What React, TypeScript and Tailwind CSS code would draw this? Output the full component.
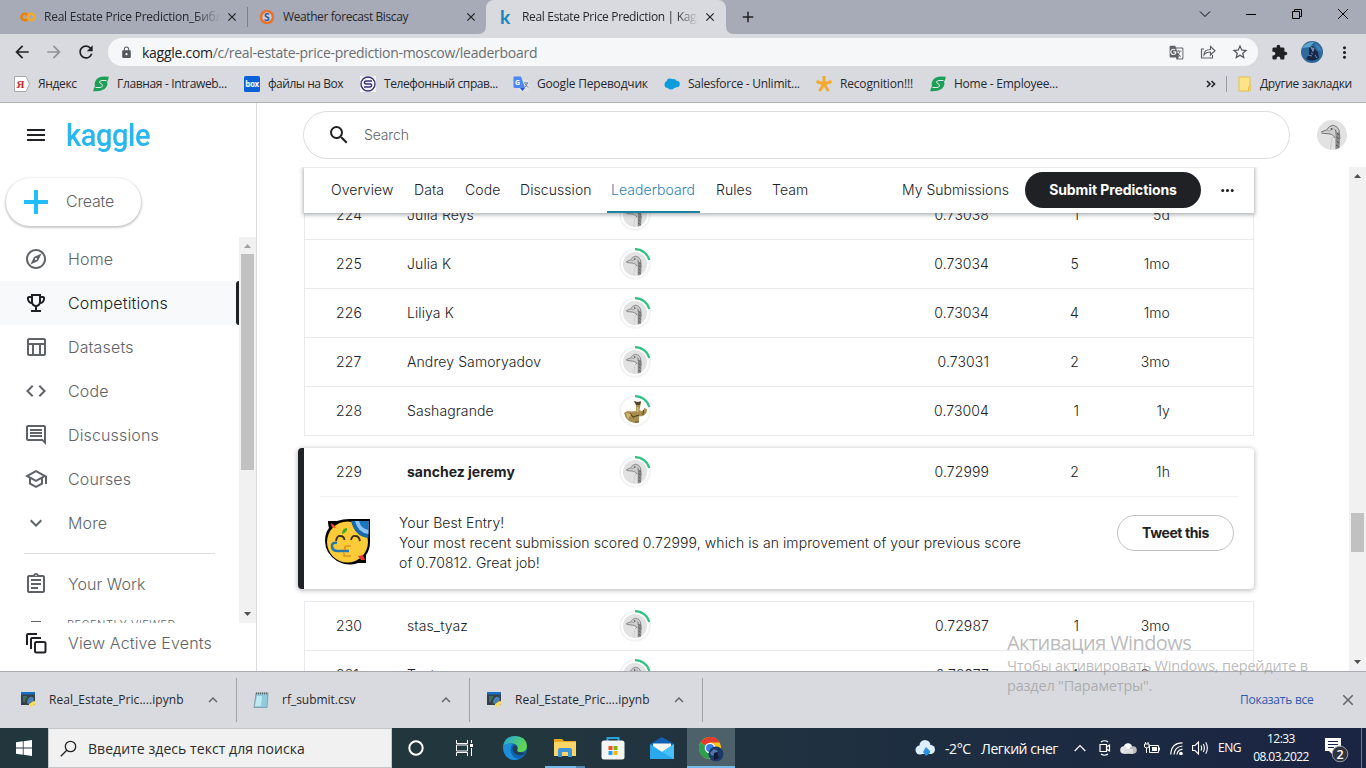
import React from "react";
import {
  MdAdd, MdArrowBack, MdArrowForward, MdClose, MdCode, MdExpandLess, MdExpandMore, MdExtension, MdGTranslate,
  MdLock, MdMenu, MdMoreHoriz, MdMoreVert, MdOutlineAssignment, MdOutlineComment, MdOutlineEmojiEvents,
  MdOutlineExplore, MdOutlineSchool, MdOutlineTableChart, MdRefresh, MdSearch, MdStarOutline,
} from "react-icons/md";

const ui = "font-['Open_Sans','Noto_Sans',sans-serif]";

function Goose({ className }: { className: string }) {
  return (
    <svg viewBox="0 0 30 30" className={className}>
      <circle cx="15" cy="15" r="15" fill="#e2e2e2" />
      <path d="M4 12 L9.500 10 Q12 5.500 16 5.200 Q20.500 6 22 10 L23 19 L22.500 28 L18 29.500 L18 20 Q18 16 15.500 14.500 L11 14.500 L5 13.500 Z" fill="#cfcfcf" />
      <path d="M18.500 13.500 L22 12 L23 21 L22.500 28 L18.500 29.500 Z" fill="#8a8a8a" />
      <path d="M4 12 L9.500 10 Q12 5.500 16 5.200 Q20.500 6 22 10 L23 19 M4.500 13.200 L12 13.800 Q17 14.500 17.500 18" fill="none" stroke="#6c6c6c" strokeWidth=".9" />
      <path d="M9.500 10.200 L12.500 11 L16.500 8.500" fill="none" stroke="#999" strokeWidth=".8" />
      <path d="M15.500 17 Q14 23 13.500 29.500" fill="none" stroke="#b5b5b5" strokeWidth=".6" />
      <path d="M18 9.500 q1.500 1 1 4 M19.500 17 l2.500 2 M19.500 21 l2.500 2 M19 25 l3 2 M20 13 l2 2" stroke="#505050" strokeWidth=".9" fill="none" />
      <circle cx="14.500" cy="8.800" r=".9" fill="#444" />
    </svg>
  );
}

function TierAvatar({ goose = true }: { goose?: boolean }) {
  return (
    <div className="relative h-8 w-8">
      <svg viewBox="0 0 32 32" className="h-8 w-8">
        <circle cx="16" cy="16" r="14.800" fill="none" stroke="#f1f3f4" strokeWidth="2" />
        <path d="M16 1.200 A14.800 14.800 0 0 1 30.300 12" fill="none" stroke="#33c285" strokeWidth="2.200" />
        {!goose && (
          <g>
            <path d="M5 18 Q8 15 12 16.500 L17 16 L17 11 L15 6 L18 7 L22 6.500 L21.500 10 L20.500 15 Q23 17 24.500 15 L25 13 L28 14 L27.500 18 L24 21 L20 21.500 L20 27 L16 28 Q9 27 6.500 22 Z" fill="#a88f50" />
            <path d="M15 6 L18 7 L22 6.500 L21 10 L17.500 10 Z" fill="#54402a" />
            <path d="M11 18 L14 22 L20 20 M24.500 15 L24 20 M16 27 L20 27" stroke="#5a4423" strokeWidth="1.100" fill="none" />
            <path d="M7 18 l5 1 l-3 5 z M17.500 12 h2 v5 h-2 z" fill="#d0b972" />
          </g>
        )}
      </svg>
      {goose && <Goose className="absolute left-1 top-1 h-6 w-6" />}
    </div>
  );
}

/* ---------- browser chrome ---------- */

function SwooshIcon() {
  return (
    <svg viewBox="0 0 16 16" className="h-4 w-4">
      <path d="M5 2 Q9 0 15.800 .8 Q15.500 4 14 5.500 Q15.500 9.500 11.500 13 Q7 16 .2 15.200 Q.5 12 2 10.500 Q.5 5.500 5 2 Z" fill="#1d9f57" />
      <path d="M13.500 4.500 H9 Q6.800 4.600 6.500 6 Q6.500 7.200 8 7.700 Q9.800 8.300 9.500 9.800 Q9 11.500 7 11.500 H2.500" fill="none" stroke="#e4e8e6" strokeWidth="1" />
    </svg>
  );
}

const bookmarks = [
  { w: "w-[79px]", t: "tracking-[-0.35px]", label: "Яндекс", icon: (
    <svg viewBox="0 0 16 16" className="h-4 w-4"><path d="M.5 .5 H12 L15.500 8 L12 15.500 H.5 Z" fill="#fff" stroke="#aaa" /><text x="2.500" y="12" fontSize="11" fontWeight="bold" fontFamily="Liberation Serif" fill="#d3262b">Я</text></svg>) },
  { w: "w-[151px]", t: "tracking-[-0.35px]", label: "Главная - Intraweb...", icon: <SwooshIcon /> },
  { w: "w-[116px]", t: "tracking-[-0.48px]", label: "файлы на Box", icon: (
    <svg viewBox="0 0 16 16" className="h-4 w-4"><rect width="16" height="16" rx="1.500" fill="#0b61d5" /><text x="1.200" y="10.500" fontSize="8" fontWeight="bold" fontFamily="Open Sans" textLength="13.500" fill="#fff">box</text></svg>) },
  { w: "w-[153px]", t: "tracking-[-0.4px]", label: "Телефонный справ...", icon: (
    <svg viewBox="0 0 16 16" className="h-4 w-4"><rect width="16" height="16" fill="#f4f2f8" /><circle cx="8" cy="8" r="7" fill="none" stroke="#3d3478" strokeWidth="1.400" /><path d="M12 5 H6.500 Q4.500 5 4.500 6.500 Q4.500 8 6.500 8 H11.500 M4 11 H9.500 Q11.500 11 11.500 9.500 V8" fill="none" stroke="#3d3478" strokeWidth="1.400" /></svg>) },
  { w: "w-[151px]", t: "tracking-[-0.2px]", label: "Google Переводчик", icon: (
    <svg viewBox="0 0 16 16" className="h-4 w-4"><rect x="6" y="4" width="9.500" height="11" rx="1" fill="#dfe3ea" /><path d="M1 .5 H8 L12 12 H2 Q.5 12 .5 10.500 V1 Z" fill="#4d86ee" /><path d="M7 12 H12 L9.500 15 Z" fill="#2f50c8" /><text x="2" y="9" fontSize="7" fontWeight="bold" fontFamily="Open Sans" fill="#fff">G</text><path d="M11 7 H15 M13 6 V7 M14.500 7 Q13.500 10 11.500 11.500 M12 8 L15 11.500" stroke="#6a7a8d" strokeWidth=".9" fill="none" /></svg>) },
  { w: "w-[152px]", t: "tracking-[-0.25px]", label: "Salesforce - Unlimit...", icon: (
    <svg viewBox="0 0 16 16" className="h-4 w-4"><g fill="#0e9ddb"><circle cx="4" cy="8.500" r="3.500" /><circle cx="6" cy="6" r="3.400" /><circle cx="9.500" cy="6" r="3" /><circle cx="12.500" cy="8" r="3.300" /><circle cx="7" cy="10" r="3.500" /><circle cx="10" cy="9" r="3" /></g></svg>) },
  { w: "w-[114px]", t: "tracking-[-0.18px]", label: "Recognition!!!", icon: (
    <svg viewBox="0 0 16 16" className="h-4 w-4"><g stroke="#f1a92f" strokeWidth="3"><path d="M8 8 V0 M8 8 L15.500 5.500 M8 8 L.5 5.500 M8 8 L12.500 15 M8 8 L3.500 15" /></g></svg>) },
  { w: "w-[150px]", t: "tracking-[-0.25px]", label: "Home - Employee...", icon: <SwooshIcon /> },
];

function Chrome() {
  return (
    <header className={`shrink-0 text-[12px] text-[#26282d] ${ui}`}>
      <div className="flex h-[34px] bg-[#a7abb7]">
        <div className="flex w-[247px] items-center pl-5">
          <svg viewBox="0 0 16 10" className="h-2.5 w-4"><circle cx="4.800" cy="5" r="3.300" fill="none" stroke="#e8820c" strokeWidth="2.600" /><circle cx="11.200" cy="5" r="3.300" fill="none" stroke="#f2a92c" strokeWidth="2.600" /></svg>
          <span className="ml-2 w-[177px] overflow-hidden whitespace-nowrap tracking-[-0.25px] mask-r-from-85%">Real Estate Price Prediction_Библиотека</span>
          <MdClose className="ml-1 h-[14px] w-[14px] text-[#202124]" />
        </div>
        <div className="my-[7px] w-px bg-[#7b7f8a]" />
        <div className="flex w-[238px] items-center pl-[11px]">
          <svg viewBox="0 0 16 16" className="h-4 w-4"><circle cx="8" cy="8" r="6" fill="#c9cdd6" stroke="#e8722b" strokeWidth="2.600" /><text x="5" y="12" fontSize="10.500" fontWeight="bold" fontFamily="Open Sans" fill="#2b5b9e">S</text></svg>
          <span className="ml-2 w-[180px] whitespace-nowrap tracking-[-0.4px]">Weather forecast Biscay</span>
          <MdClose className="ml-[1px] h-[14px] w-[14px] text-[#202124]" />
        </div>
        <div className="relative flex w-[240px] items-center rounded-t-lg bg-[#d9dadf] pl-3">
          <svg viewBox="0 0 8 8" className="absolute -left-2 bottom-0 h-2 w-2"><path d="M8 0 V8 H0 Q8 8 8 0 Z" fill="#d9dadf" /></svg>
          <svg viewBox="0 0 8 8" className="absolute -right-2 bottom-0 h-2 w-2"><path d="M0 0 V8 H8 Q0 8 0 0 Z" fill="#d9dadf" /></svg>
          <span className="w-4 pb-[2px] pl-[2px] font-['Lato'] text-[19px] font-bold leading-none text-[#1584bb]">k</span>
          <span className="ml-2 w-[176px] overflow-hidden whitespace-nowrap tracking-[-0.33px] mask-r-from-88%">Real Estate Price Prediction | Kaggle</span>
          <MdClose className="ml-[5px] h-[14px] w-[14px] text-[#202124]" />
        </div>
        <MdAdd className="ml-[13px] mt-[8px] h-[18px] w-[18px] text-[#202124]" />
        <div className="flex-1" />
        <div className="flex items-start pt-[8px] text-black">
          <svg viewBox="0 0 12 12" className="mr-[34px] h-3 w-3"><path d="M1 3.500 L6 8.500 L11 3.500" fill="none" stroke="currentColor" /></svg>
          <svg viewBox="0 0 12 12" className="mr-[34px] h-3 w-3"><path d="M1 6.500 H11" stroke="currentColor" /></svg>
          <svg viewBox="0 0 12 12" className="mr-[34px] h-3 w-3"><path d="M1.500 3.500 H8.500 V10.500 H1.500 Z M3.500 3.500 V1.500 H10.500 V8.500 H8.500" fill="none" stroke="currentColor" /></svg>
          <svg viewBox="0 0 12 12" className="mr-[17px] h-3 w-3"><path d="M1 1 L11 11 M11 1 L1 11" stroke="currentColor" /></svg>
        </div>
      </div>

      <div className="flex h-[36px] items-center bg-[#d9dadf] pl-[12px]">
        <MdArrowBack className="h-5 w-5 text-[#202124]" />
        <MdArrowForward className="ml-3 h-5 w-5 text-[#909297]" />
        <MdRefresh className="ml-3 h-5 w-5 text-[#202124]" />
        <div className="ml-[12px] flex h-7 w-[1150px] shrink-0 items-center rounded-full bg-[#f5f7f9] pl-3">
          <MdLock className="h-[13px] w-[13px] text-[#55585c]" />
          <span className="ml-[9px] flex-1 whitespace-nowrap text-[14px] tracking-[-0.28px] text-[#6b6e73]">
            <span className="text-[#202124]">kaggle.com</span>/c/real-estate-price-prediction-moscow/leaderboard
          </span>
          <MdGTranslate className="h-[15px] w-[15px] text-[#5f6368]" />
          <svg viewBox="0 0 16 16" className="ml-[16px] h-4 w-4"><path d="M4 5 H1.500 V14 H12.500 V11 M4 11 Q4 5.500 10.500 5.500 V2.500 L15 6.800 L10.500 11 V8 Q6 8 4 11 Z" fill="none" stroke="#5f6368" strokeWidth="1.200" /></svg>
          <MdStarOutline className="ml-[15px] mr-[9px] h-[18px] w-[18px] text-[#4f5257]" />
        </div>
        <MdExtension className="ml-[13px] h-[17px] w-[17px] shrink-0 text-[#202124]" />
        <svg viewBox="0 0 22 22" className="ml-[13px] h-[22px] w-[22px] shrink-0"><circle cx="11" cy="11" r="11" fill="#2e6a9c" /><path d="M1 7 Q6 0 13 1 L9 6 Z" fill="#5fa5cc" /><path d="M14 3 Q20 5 21 11 L17 9 Z" fill="#3f83b4" /><path d="M5 18 L8 13 L8 7 L12 5 L14 8 L17 11 L18 17 Q12 22 5 18 Z" fill="#17284b" /><path d="M10 6.500 l3 1 l-1 3 z M7 14 l4 1 M14 14 l2 3 M10 12 l2 1" fill="#7792b4" stroke="#6f8cb8" /></svg>
        <MdMoreVert className="ml-[12px] h-[19px] w-[19px] shrink-0 text-[#202124]" />
      </div>

      <div className="flex h-[33px] items-center border-b border-[#b0b1b5] bg-[#d9dadf] pb-1 pl-[14px]">
        {bookmarks.map((b) => (
          <div key={b.label} className={`flex shrink-0 items-center gap-2 whitespace-nowrap ${b.w} ${b.t}`}>
            {b.icon}
            <span>{b.label}</span>
          </div>
        ))}
        <div className="flex-1" />
        <svg viewBox="0 0 10 8" className="h-2 w-2.5"><path d="M1 1 L4 4 L1 7 M5.500 1 L8.500 4 L5.500 7" fill="none" stroke="#26282d" strokeWidth="1.700" /></svg>
        <div className="ml-[10px] mr-[11px] h-4 w-px bg-[#9a9ca2]" />
        <svg viewBox="0 0 14 16" className="h-4 w-3.5"><path d="M1 1 H12 V15 H1 Z" fill="#fde48b" stroke="#e6bd46" /><path d="M10.500 15 V11 L12 9.500 V15" fill="#fff3be" stroke="#e6bd46" /></svg>
        <span className="ml-[8px] mr-[14px] w-[92px] whitespace-nowrap tracking-[-0.36px]">Другие закладки</span>
      </div>
    </header>
  );
}

/* ---------- kaggle sidebar ---------- */

const nav = [
  { label: "Home", Icon: MdOutlineExplore },
  { label: "Competitions", Icon: MdOutlineEmojiEvents, active: true },
  { label: "Datasets", Icon: MdOutlineTableChart },
  { label: "Code", Icon: MdCode },
  { label: "Discussions", Icon: MdOutlineComment },
  { label: "Courses", Icon: MdOutlineSchool },
  { label: "More", Icon: MdExpandMore },
];

function Sidebar() {
  return (
    <aside className="flex w-[257px] shrink-0 flex-col border-r border-[#dadce0] text-[16px] font-[350] text-[#5f6368]">
      <div className="flex h-[64px] items-center pl-6">
        <MdMenu className="h-6 w-6 text-[#202124]" />
        <span className="ml-[18px] origin-left scale-x-[0.91] font-['Roboto'] text-[32px] font-medium leading-none tracking-[-0.5px] text-[#2ab7f1]">kaggle</span>
      </div>
      <div className="ml-[6px] mt-[11px] flex h-[48px] w-[135px] items-center rounded-full pl-[18px] shadow-[0_1px_2px_1px_rgba(60,64,67,0.28)]">
        <svg viewBox="0 0 24 24" className="h-6 w-6"><path d="M12 0 V24 M0 12 H24" stroke="#20beff" strokeWidth="4" /></svg>
        <span className="ml-[18px] pb-[2px] tracking-[-0.2px]">Create</span>
      </div>
      <div className="mt-[11px] flex h-[386px]">
        <div className="w-[239px] overflow-hidden">
          {nav.map(({ label, Icon, active }) => (
            <div key={label} className={`flex h-11 items-center pl-6 ${active ? "bg-[#f8f9fb] text-[#202124]" : ""}`}>
              <Icon className="h-6 w-6" />
              <span className="ml-5 flex-1 tracking-[0.15px]">{label}</span>
              {active && <div className="h-11 w-[3px] rounded-l bg-[#202124]" />}
            </div>
          ))}
          <div className="ml-6 mt-2 h-px w-[191px] bg-[#dadce0]" />
          <div className="mt-2 flex h-11 items-center pl-6">
            <MdOutlineAssignment className="h-6 w-6" />
            <span className="ml-5 tracking-[0.05px]">Your Work</span>
          </div>
          <div className="mt-[13px] flex items-start pl-[31px]">
            <div className="mt-[2px] h-2 w-[10px] border-t border-[#5f6368]" />
            <span className="ml-[26px] text-[11px] leading-[13px] tracking-[0.5px]">RECENTLY VIEWED</span>
          </div>
        </div>
        <div className="flex w-[17px] flex-col items-center bg-[#f1f1f1]">
          <svg viewBox="0 0 17 17" className="h-[17px] w-[17px]"><path d="M5 11 L8.500 7 L12 11 Z" fill="#a3a3a3" /></svg>
          <div className="h-[216px] w-[13px] bg-[#c1c1c1]" />
          <div className="flex-1" />
          <svg viewBox="0 0 17 17" className="h-[17px] w-[17px]"><path d="M5 6 L8.500 10 L12 6 Z" fill="#505050" /></svg>
        </div>
      </div>
      <div className="flex h-10 items-center pl-[25px]">
        <svg viewBox="0 0 22 22" className="h-[22px] w-[22px]" fill="none" stroke="#202124" strokeWidth="2"><path d="M2 13 V3 Q2 2 3 2 H12 M6 17 V7 Q6 6 7 6 H16" /><rect x="10" y="10" width="10.500" height="10.500" rx="1.500" /></svg>
        <span className="ml-[21px] tracking-[0.15px]">View Active Events</span>
      </div>
    </aside>
  );
}

/* ---------- leaderboard ---------- */

type Row = { rank: string; name: string; score: string; entries: string; last: string; goose?: boolean; bold?: boolean };

const above: Row[] = [
  { rank: "224", name: "Julia Reys", score: "0.73038", entries: "1", last: "5d" },
  { rank: "225", name: "Julia K", score: "0.73034", entries: "5", last: "1mo" },
  { rank: "226", name: "Liliya K", score: "0.73034", entries: "4", last: "1mo" },
  { rank: "227", name: "Andrey Samoryadov", score: "0.73031", entries: "2", last: "3mo" },
  { rank: "228", name: "Sashagrande", score: "0.73004", entries: "1", last: "1y", goose: false },
];
const below: Row[] = [
  { rank: "230", name: "stas_tyaz", score: "0.72987", entries: "1", last: "3mo" },
  { rank: "231", name: "Test", score: "0.72977", entries: "4", last: "2mo" },
];

function Cells({ r }: { r: Row }) {
  return (
    <div className="grid h-[48px] grid-cols-[71px_212px_40px_330px_90px_91px] items-center pl-[31px] text-[14px] tracking-[0.1px] [&>span]:pb-[2px]">
      <span>{r.rank}</span>
      <span className={r.bold ? "font-bold tracking-normal" : ""}>{r.name}</span>
      <TierAvatar goose={r.goose} />
      <span className="text-right">{r.score}</span>
      <span className="text-right">{r.entries}</span>
      <span className="text-right">{r.last}</span>
    </div>
  );
}

const tabs = [
  { label: "Overview", w: "w-[83px]" },
  { label: "Data", w: "w-[51px]" },
  { label: "Code", w: "w-[55px]" },
  { label: "Discussion", w: "w-[91px]" },
  { label: "Leaderboard", w: "w-[105px]", on: true },
  { label: "Rules", w: "w-[56px]" },
  { label: "Team", w: "w-[60px]" },
];

function PartyFace() {
  return (
    <svg viewBox="0 0 46 46" className="h-[46px] w-[46px]">
      <path d="M3 2 H12 Q18 0 24 0 H45 V23 Q45 31 41 36 V44 H33 Q23 48 12 42 Q0 34 0 22 Q0 14 4 9 Z" fill="#000" />
      <circle cx="22.500" cy="23" r="20.500" fill="#fdca38" />
      <path d="M26 2 H43.500 V19 Q30 18 26 2 Z" fill="#1769b0" />
      <path d="M30 2 H43.500 V15 Q33 14 30 2 Z" fill="#8dc6f5" />
      <path d="M34 2 H43.500 V11 Q36 10 34 2 Z" fill="#1c76bd" />
      <path d="M3 2 H11 L10 6 L7 9 L4 9 Z" fill="#000" />
      <path d="M6 4 L9 6 L11 9 L7 8.500 Z" fill="#ef5a23" />
      <path d="M17 15 Q17 9 22 9 Q23 13 17 15 Z" fill="#48a91f" />
      <path d="M11 22 Q12 16.500 15.500 17 Q19 17 19.500 21 M26 21 Q27 16.500 30.500 17 Q34 17 35 22" fill="none" stroke="#3b2c12" strokeWidth="1.800" />
      <path d="M12 24 Q7 23 7 27 Q7 32 13 32 H24" fill="none" stroke="#2678ac" strokeWidth="2.600" />
      <path d="M26 27 H21 Q19 28 20 31 M19 34 V37 H26" fill="none" stroke="#d99422" strokeWidth="1.600" />
      <path d="M34 41 L41 35 V44 H34 Z" fill="#000" />
      <path d="M33 37 L38 36 L40 41 L36 41 Z" fill="#e93436" />
    </svg>
  );
}

function Main() {
  return (
    <main className="flex flex-1 flex-col font-[350]">
      <div className="flex h-[64px] shrink-0 items-center pl-[46px]">
        <div className="flex h-[48px] w-[987px] items-center rounded-full border border-[#dadce0] pl-[23px]">
          <MdSearch className="h-6 w-6 text-[#202124]" />
          <span className="ml-[13px] pb-px text-[14px] tracking-[-0.15px] text-[#5f6368]">Search</span>
        </div>
        <Goose className="ml-[27px] h-[30px] w-[30px]" />
      </div>
      <div className="flex min-h-0 flex-1">
        <div className="flex w-[1092px] flex-col overflow-hidden pl-[41px] text-[#202124]">
          <div className="relative z-10 ml-[6px] flex h-[46px] w-[950px] shrink-0 items-center bg-white pl-[27px] text-[14px] shadow-[0_1px_4px_1px_rgba(60,64,67,0.4),inset_0_1px_0_#ececee]">
            {tabs.map((t) => (
              <div key={t.label} className={`flex h-full items-center tracking-[0.07px] ${t.w}`}>
                {t.on ? (
                  <span className="-ml-1 flex h-full w-[93px] items-center border-b-2 border-[#20809f] pl-1 text-[#2b82b4]">{t.label}</span>
                ) : (
                  <span className="pb-[2px]">{t.label}</span>
                )}
              </div>
            ))}
            <span className="ml-[70px] w-[123px] whitespace-nowrap pb-[2px]">My Submissions</span>
            <span className="flex h-9 w-[176px] items-center justify-center rounded-full bg-[#202124] pb-[2px] font-bold tracking-[-0.1px] text-white">Submit Predictions</span>
            <MdMoreHoriz className="ml-[17px] h-[19px] w-[19px]" />
          </div>

          <div className="ml-[6px] h-[223px] w-[950px] shrink-0 overflow-hidden">
            <div className="-mt-[22px] border-x border-[#e8eaed]">
              {above.map((r) => (
                <div key={r.rank} className="border-b border-[#e8eaed]"><Cells r={r} /></div>
              ))}
            </div>
          </div>

          <section className="mt-[12px] h-[141px] w-[956px] shrink-0 rounded border-l-[6px] border-[#202124] shadow-[0_1px_4px_1px_rgba(60,64,67,0.3)]">
            <div className="px-px">
              <Cells r={{ rank: "229", name: "sanchez jeremy", score: "0.72999", entries: "2", last: "1h", bold: true }} />
            </div>
            <div className="mx-4 h-px bg-[#f1f3f4]" />
            <div className="flex pl-[21px] pr-5 pt-[16px]">
              <div className="pt-[6px]"><PartyFace /></div>
              <p className="ml-7 w-[640px] text-[14px] leading-5 tracking-[0.08px]">
                Your Best Entry!<br />
                Your most recent submission scored 0.72999, which is an improvement of your previous score<br />
                of 0.70812. Great job!
              </p>
              <div className="flex-1" />
              <span className="mt-[2px] flex h-9 w-[117px] items-center justify-center rounded-full border border-[#bdc1c6] pb-px text-[14px] font-bold tracking-[-0.4px]">Tweet this</span>
            </div>
          </section>

          <div className="ml-[6px] mt-3 w-[950px] shrink-0 border-x border-t border-[#e8eaed]">
            {below.map((r) => (
              <div key={r.rank} className="border-b border-[#e8eaed]"><Cells r={r} /></div>
            ))}
          </div>
        </div>
        <div className="flex w-[17px] flex-col items-center bg-[#f1f1f1]">
          <svg viewBox="0 0 17 17" className="h-[17px] w-[17px]"><path d="M5 11 L8.500 7 L12 11 Z" fill="#505050" /></svg>
          <div className="mt-[329px] h-[39px] w-[13px] bg-[#c1c1c1]" />
          <div className="flex-1" />
          <svg viewBox="0 0 17 17" className="h-[17px] w-[17px]"><path d="M5 6 L8.500 10 L12 6 Z" fill="#505050" /></svg>
        </div>
      </div>
    </main>
  );
}

/* ---------- downloads + taskbar ---------- */

function NotebookIcon() {
  return (
    <svg viewBox="0 0 16 16" className="h-4 w-4">
      <path d="M1 0 H15 V13 H1 Z" fill="#35414a" /><path d="M1 0 H15 V2.500 H1 Z" fill="#1b6fc0" />
      <path d="M3 5 H7 M3 7 H6 M3 9 H5" stroke="#45a06c" />
      <path d="M7 11 Q7 6 11 4.500 L14 6 L13 9 L9 12 Z" fill="#4c80b2" /><path d="M9 12 L14 8.500 Q16.500 11 14 13.500 Q11 15.500 9 15 Z" fill="#f5dc62" />
    </svg>
  );
}

function Downloads() {
  return (
    <div className={`flex h-[57px] shrink-0 items-center border-t border-[#a9abb0] bg-[#d9dadf] text-[12px] text-[#26282d] ${ui}`}>
      {[
        { k: "a", name: "Real_Estate_Pric....ipynb", nb: true, w: "w-[237px]", t: "tracking-[0.05px]" },
        { k: "b", name: "rf_submit.csv", nb: false, w: "w-[233px]", t: "tracking-[-0.02px]" },
        { k: "c", name: "Real_Estate_Pric....ipynb", nb: true, w: "w-[233px]", t: "tracking-[0.05px]" },
      ].map((d) => (
        <div key={d.k} className={`flex h-11 items-center border-r border-[#a0a2a8] pr-[14px] ${d.w}`}>
          <div className="ml-auto flex w-[202px] items-center">
            {d.nb ? <NotebookIcon /> : (
              <svg viewBox="0 0 16 16" className="h-4 w-4"><path d="M3 1 H15 L14 15.500 H1 Z" fill="#8fcbdc" stroke="#6d8d96" strokeWidth=".7" /><path d="M4 4 H9 L8 14 H2 Z" fill="#bfe8f0" /><path d="M3 1.500 H15" stroke="#5d6a6e" strokeWidth="2" strokeDasharray="1 1" /></svg>
            )}
            <span className={`ml-[13px] flex-1 whitespace-nowrap ${d.t}`}>{d.name}</span>
            <MdExpandLess className="h-[18px] w-[18px] text-[#5f6368]" />
          </div>
        </div>
      ))}
      <div className="flex-1" />
      <span className="w-[76px] whitespace-nowrap font-medium tracking-[-0.25px] text-[#2c59ae]">Показать все</span>
      <MdClose className="ml-[23px] mr-[9px] h-[18px] w-[18px] text-[#5f6368]" />
    </div>
  );
}

function Taskbar() {
  return (
    <footer className={`flex h-10 shrink-0 items-center bg-linear-to-r from-[#22363e] from-40% to-[#1a2443] text-white ${ui}`}>
      <div className="flex w-12 justify-center">
        <svg viewBox="0 0 16 16" className="h-4 w-4" fill="#fff"><path d="M0 2.300 L6.800 1.300 V7.500 H0 Z M7.600 1.200 L16 0 V7.500 H7.600 Z M0 8.400 H6.800 V14.700 L0 13.700 Z M7.600 8.400 H16 V16 L7.600 14.800 Z" /></svg>
      </div>
      <div className="flex h-10 w-[344px] items-center border border-[#c4c7c9] bg-[#f1f1f1] pl-[11px] text-[#2b2b2b]">
        <svg viewBox="0 0 17 17" className="h-[17px] w-[17px]"><circle cx="10.500" cy="6.500" r="5.200" fill="none" stroke="#222" strokeWidth="1.300" /><path d="M6.800 10.200 L.8 16.200" stroke="#222" strokeWidth="1.300" /></svg>
        <span className="ml-[11px] whitespace-nowrap text-[14px] tracking-[0.06px]">Введите здесь текст для поиска</span>
      </div>
      <div className="flex w-12 justify-center"><svg viewBox="0 0 16 16" className="h-4 w-4"><circle cx="8" cy="8" r="6.700" fill="none" stroke="#fff" strokeWidth="2" /></svg></div>
      <div className="flex w-[49px] justify-center">
        <svg viewBox="0 0 17 16" className="h-4 w-[17px]" fill="none" stroke="#fff"><path d="M.5 0 V3.500 H11.500 V0 M.5 16 V12.500 H11.500 V16 M.5 5 H11.500 V11 H.5 Z M15.500 0 V3 M15.500 8 V16" /><path d="M14 4 H17 V7 H14 Z" fill="#fff" stroke="none" /></svg>
      </div>
      <div className="flex w-[52px] justify-center">
        <svg viewBox="0 0 24 24" className="h-6 w-6">
          <defs>
            <linearGradient id="edgeTop" x1="0" y1="0" x2="1" y2=".5"><stop offset="0" stopColor="#1fa5e0" /><stop offset="1" stopColor="#62d84c" /></linearGradient>
          </defs>
          <circle cx="12" cy="12" r="12" fill="#1264b0" />
          <path d="M0 11 Q1 0 12 0 Q23 0 24 10 Q24 16 17 16 Q13 16 14.500 13 Q15 8 10 7.500 Q3 7 0 11 Z" fill="url(#edgeTop)" />
          <path d="M0 11 Q4 6 10 8 Q7 10 7.500 15 Q9 22 16 23 Q8 26 3 20 Q0 16 0 11 Z" fill="#1b8fdb" />
          <path d="M10 10 Q8 17 15 19 Q19 20 22.500 17 Q19 16.500 16 16 Q13 15.500 14.500 13 Q15 8 10 10 Z" fill="#1e3f58" />
        </svg>
      </div>
      <div className="flex h-10 w-12 flex-col items-center justify-between pt-[10px]">
        <svg viewBox="0 0 22 20" className="h-5 w-[22px]"><path d="M0 1 H8 L10 3 H22 V18 H0 Z" fill="#e6a824" /><path d="M0 4 H22 V18 H0 Z" fill="#fbd567" /><path d="M4 19 V12 Q4 10 6 10 H16 Q18 10 18 12 V19 H14 V14 H8 V19 Z" fill="#3d95d9" /></svg>
        <div className="flex h-[2px] w-10 bg-[#76b9ed]"><div className="ml-auto w-[9px] bg-[#5387b0]" /></div>
      </div>
      <div className="flex w-[50px] justify-center pr-[3px]">
        <svg viewBox="0 0 24 24" className="h-6 w-6"><path d="M6.500 5 V2 H17.500 V5" fill="none" stroke="#28a4e0" strokeWidth="2" /><rect x=".5" y="4.500" width="23" height="19" rx="2.500" fill="#f5f5f5" /><path d="M7.500 10 H11.500 V14 H7.500 Z" fill="#f05022" /><path d="M12.500 10 H16.500 V14 H12.500 Z" fill="#7eb900" /><path d="M7.500 15 H11.500 V19 H7.500 Z" fill="#25a0e8" /><path d="M12.500 15 H16.500 V19 H12.500 Z" fill="#fab802" /></svg>
      </div>
      <div className="flex w-12 justify-center pr-[2px]">
        <svg viewBox="0 0 24 22" className="h-[22px] w-6"><path d="M0 7 L12 0 L24 7 V12 H0 Z" fill="#1060b4" /><path d="M3 6.500 H21 V15 H3 Z" fill="#f6f6f6" /><path d="M0 7 L12 15 L24 7 V22 H0 Z" fill="#2aa9ec" /><path d="M12 15 L24 7 V22 Z" fill="#46c2f8" /></svg>
      </div>
      <div className="flex h-10 w-12 flex-col items-center justify-between bg-[#4d616b] pt-[8px]">
        <svg viewBox="0 0 26 26" className="h-[26px] w-[26px]">
          <circle cx="12" cy="12" r="11" fill="#fac61c" /><path d="M12 12 L2.500 6.500 Q6 1 12 1 Q19 1 21.500 6.500 H12 Z" fill="#e33b2e" /><path d="M12 12 L2.500 6.500 Q-1 13 3 19 Q7 23 11 23 L15 16 Z" fill="#2e9e4f" />
          <circle cx="12" cy="12" r="5.300" fill="#fff" /><circle cx="12" cy="12" r="4" fill="#3d7de8" /><circle cx="18" cy="18" r="7.500" fill="#1c3a68" /><path d="M12 17 l4 -4 l4 2 l-2 2 l-4 3 z" fill="#5478ab" /><path d="M16 17 l3 -1 l2 6 l-5 2 z" fill="#101c36" />
        </svg>
        <div className="h-[2px] w-12 bg-[#76b9ed]" />
      </div>
      <div className="flex-1" />
      <svg viewBox="0 0 20 18" className="h-[18px] w-5"><g fill="#dcefff"><circle cx="5" cy="11" r="4.500" /><circle cx="10" cy="6.500" r="5.500" /><circle cx="15.500" cy="10.500" r="4.500" /><path d="M5 8 H15 V15 H5 Z" /></g><path d="M11 8 L15 12 V14 L11 17 L8 13 Z" fill="#2d8de0" /></svg>
      <span className="ml-[10px] w-[36px] whitespace-nowrap text-[14px] tracking-[-0.4px]">-2°C</span>
      <span className="w-[76px] whitespace-nowrap text-[14px] tracking-[-0.45px]">Легкий снег</span>
      <svg viewBox="0 0 12 8" className="ml-[17px] h-2 w-3"><path d="M.7 7 L6 1.500 L11.300 7" fill="none" stroke="#fff" strokeWidth="1.200" /></svg>
      <svg viewBox="0 0 12 16" className="ml-[13px] h-4 w-3" fill="none" stroke="#fff" strokeWidth="1.200"><path d="M2 2 Q5.500 -.5 9 2 M2 14 Q5.500 16.500 9 14 M1 4.500 H7.500 V11.500 H1 Z M7.500 7 L10.500 5 V11 L7.500 9" /></svg>
      <svg viewBox="0 0 17 11" className="ml-[9px] h-[11px] w-[17px]"><circle cx="8" cy="4.500" r="4.300" fill="#fff" /><circle cx="4" cy="7" r="3.800" fill="#e6e6e6" /><circle cx="13" cy="7" r="3.800" fill="#bbb" /><path d="M4 6 H13 V10.800 H4 Z" fill="#ddd" /></svg>
      <svg viewBox="0 0 16 12" className="ml-[7px] h-3 w-4" fill="none" stroke="#fff"><path d="M5.500 3.500 H14.500 V10.500 H5.500 Z M15.500 5.500 V8.500 M.5 2 H5 V5 Q3 7 .5 5 Z M1.500 0 V2 M4 0 V2 M2.500 6 V11" /><path d="M8 5 H13 V9 H8 Z" fill="#fff" stroke="none" /></svg>
      <svg viewBox="0 0 13 13" className="ml-[10px] h-[13px] w-[13px]" fill="none" stroke="#fff" strokeWidth="1.200"><path d="M.8 12.500 Q1 1 12.500 .8 M4 12.500 Q4.500 5 12.500 4 M7 12.500 Q7.500 8 12.500 7.200" /><circle cx="11" cy="11.500" r="1.200" fill="#fff" /></svg>
      <svg viewBox="0 0 17 14" className="ml-[9px] h-[14px] w-[17px]" fill="none" stroke="#fff" strokeWidth="1.100"><path d="M.6 4.500 H3 L6.500 1 V13 L3 9.500 H.6 Z M9 4.500 Q10.300 7 9 9.500 M11.300 3 Q13.500 7 11.300 11 M13.700 1.300 Q17 7 13.700 12.700" /></svg>
      <span className="ml-[9px] w-[23px] text-[12px] tracking-[-0.5px]">ENG</span>
      <div className="ml-[12px] w-[56px] whitespace-nowrap text-center text-[12px] leading-[18px] tracking-[-0.55px]">12:33<br />08.03.2022</div>
      <svg viewBox="0 0 26 26" className="ml-[15px] mt-1 h-[26px] w-[26px]"><path d="M1 1 H17 V14 H9 V18 L5 14 H1 Z" fill="#fff" /><path d="M4 4.500 H14 M4 7.500 H14 M4 10.500 H10" stroke="#1a2443" /><circle cx="16" cy="17" r="7.800" fill="#2f333c" stroke="#969aa4" /><text x="12.500" y="21.500" fontSize="12.500" fontWeight="600" fontFamily="Open Sans" fill="#fff">2</text></svg>
      <div className="ml-[11px] mr-[4px] h-10 w-px bg-[#6d7487]" />
    </footer>
  );
}

export default function App() {
  return (
    <div className="relative flex h-[768px] w-[1366px] flex-col overflow-hidden bg-white font-['Inter','Liberation_Sans',sans-serif]">
      <Chrome />
      <div className="flex min-h-0 flex-1">
        <Sidebar />
        <Main />
      </div>
      <Downloads />
      <Taskbar />
      <div className={`pointer-events-none absolute left-[1007px] top-[630px] z-20 whitespace-nowrap text-[#8c8c8c]/60 ${ui}`}>
        <div className="text-[20px] leading-[26px] tracking-[-0.6px]">Активация Windows</div>
        <div className="text-[14.5px] leading-5 tracking-[-0.2px]">Чтобы активировать Windows, перейдите в<br />раздел "Параметры".</div>
      </div>
    </div>
  );
}
